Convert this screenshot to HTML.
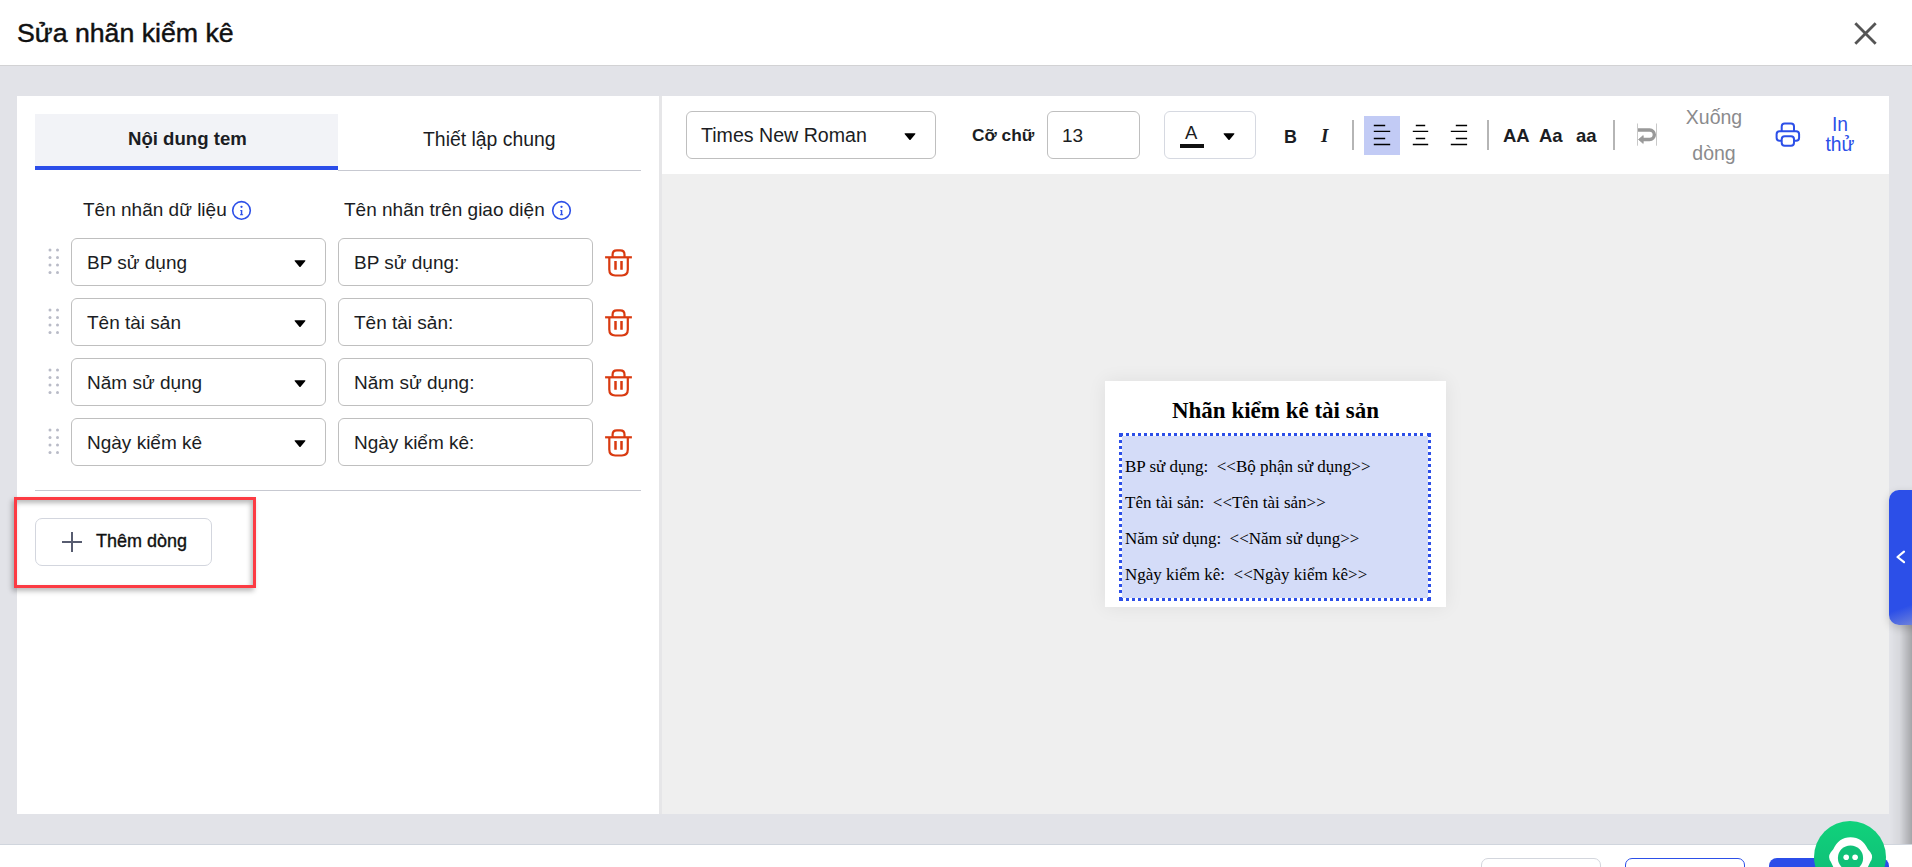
<!DOCTYPE html>
<html><head><meta charset="utf-8">
<style>
*{margin:0;padding:0;box-sizing:border-box}
html,body{width:1912px;height:867px;overflow:hidden}
body{background:#e2e3e8;font-family:"Liberation Sans",sans-serif;color:#1b1d23;position:relative}
.abs{position:absolute}
#hdr{left:0;top:0;width:1912px;height:66px;background:#fff;border-bottom:1px solid #d2d2d4}
#title{left:17px;top:16px;font-size:26.7px;line-height:34px;color:#111;white-space:nowrap;-webkit-text-stroke:0.45px #111}
#close{left:1850px;top:18px;width:30px;height:30px}
#lp{left:17px;top:96px;width:642px;height:718px;background:#fff}
#div{left:659px;top:96px;width:3px;height:718px;background:#e6e6e8}
#rp{left:662px;top:96px;width:1227px;height:718px;background:#efefef}
#tb{left:662px;top:96px;width:1227px;height:78px;background:#fff}
.tab1{left:35px;top:114px;width:303px;height:52px;background:#f2f3f7}
.tabbar{left:35px;top:166px;width:303px;height:4px;background:#2b4de9}
.tabline{left:338px;top:170px;width:303px;height:1px;background:#c7c9d1}
.tabtxt{font-size:18px;line-height:22px;white-space:nowrap}
.hdrtxt{font-size:19px;line-height:22px;white-space:nowrap}
.box{border:1px solid #bfbfbf;border-radius:6px;background:#fff}
.seltxt{font-size:18.7px;line-height:22px;white-space:nowrap;position:absolute;left:16px;top:12px}
.arrow{position:absolute;width:0;height:0}
.dots{position:absolute;width:12px;height:28px}
.sep{position:absolute;width:2px;background:#b5b5b5}
.prev{font-family:"Liberation Serif",serif;color:#000;white-space:pre}
</style></head>
<body>
<div id="hdr" class="abs"></div>
<div id="title" class="abs">Sửa nhãn kiểm kê</div>
<svg id="close" class="abs" viewBox="0 0 30 30"><path d="M5.3 5.3 L25.7 25.7 M25.7 5.3 L5.3 25.7" stroke="#555" stroke-width="2.8" stroke-linecap="butt"/></svg>

<div id="lp" class="abs"></div>
<div id="div" class="abs"></div>
<div id="rp" class="abs"></div>
<div id="tb" class="abs"></div>

<!-- tabs -->
<div class="abs tab1"></div>
<div class="abs tabbar"></div>
<div class="abs tabline"></div>
<div class="abs tabtxt" style="left:128px;top:128px;font-weight:bold;font-size:18.6px">Nội dung tem</div>
<div class="abs tabtxt" style="left:423px;top:128px;font-size:19.4px">Thiết lập chung</div>

<!-- column headers -->
<div class="abs hdrtxt" style="left:83px;top:199px">Tên nhãn dữ liệu</div>
<svg class="abs" style="left:231px;top:200px" width="21" height="21" viewBox="0 0 21 21"><circle cx="10.5" cy="10.45" r="8.8" fill="none" stroke="#2c4fe8" stroke-width="1.6"/><circle cx="10.5" cy="6.8" r="1.15" fill="#2c4fe8"/><path d="M9.3 9.9 H11.3 V14.3 H12.1 V15.3 H9 V14.3 H9.8 V10.9 H9.3Z" fill="#2c4fe8"/></svg>
<div class="abs hdrtxt" style="left:344px;top:199px">Tên nhãn trên giao diện</div>
<svg class="abs" style="left:551px;top:200px" width="21" height="21" viewBox="0 0 21 21"><circle cx="10.5" cy="10.45" r="8.8" fill="none" stroke="#2c4fe8" stroke-width="1.6"/><circle cx="10.5" cy="6.8" r="1.15" fill="#2c4fe8"/><path d="M9.3 9.9 H11.3 V14.3 H12.1 V15.3 H9 V14.3 H9.8 V10.9 H9.3Z" fill="#2c4fe8"/></svg>

<!--ROWS--><svg class="abs" style="left:48px;top:248px" width="12" height="27" viewBox="0 0 12 27" fill="#b9bbc7"><circle cx="2" cy="2" r="1.5"/><circle cx="2" cy="9.5" r="1.5"/><circle cx="2" cy="17" r="1.5"/><circle cx="2" cy="24.5" r="1.5"/><circle cx="9.5" cy="2" r="1.5"/><circle cx="9.5" cy="9.5" r="1.5"/><circle cx="9.5" cy="17" r="1.5"/><circle cx="9.5" cy="24.5" r="1.5"/></svg>
<div class="abs box" style="left:71px;top:238px;width:255px;height:48px"></div>
<div class="abs hdrtxt" style="left:87px;top:252px">BP sử dụng</div>
<svg class="abs" style="left:293px;top:259px" width="14" height="10" viewBox="0 0 14 10"><path d="M2.2 1.2 H11.8 Q13 1.2 12.2 2.2 L7.8 7.6 Q7 8.6 6.2 7.6 L1.8 2.2 Q1 1.2 2.2 1.2Z" fill="#000"/></svg>
<div class="abs box" style="left:338px;top:238px;width:255px;height:48px"></div>
<div class="abs hdrtxt" style="left:354px;top:252px">BP sử dụng:</div>
<svg class="abs" style="left:600px;top:245px" width="36" height="36" viewBox="0 0 36 36" fill="none" stroke="#d93a10" stroke-width="2.2"><path d="M5.1 12.3 H31.9"/><path d="M12.6 12.3 V9.6 Q12.6 5.3 16.9 5.3 H20.2 Q24.5 5.3 24.5 9.6 V12.3"/><path d="M9.3 12.3 V24.6 Q9.3 30.5 15.2 30.5 H21.9 Q27.8 30.5 27.8 24.6 V12.3"/><path d="M15.5 16 V24.7 M21.5 16 V24.7" stroke-width="2.5"/></svg>
<svg class="abs" style="left:48px;top:308px" width="12" height="27" viewBox="0 0 12 27" fill="#b9bbc7"><circle cx="2" cy="2" r="1.5"/><circle cx="2" cy="9.5" r="1.5"/><circle cx="2" cy="17" r="1.5"/><circle cx="2" cy="24.5" r="1.5"/><circle cx="9.5" cy="2" r="1.5"/><circle cx="9.5" cy="9.5" r="1.5"/><circle cx="9.5" cy="17" r="1.5"/><circle cx="9.5" cy="24.5" r="1.5"/></svg>
<div class="abs box" style="left:71px;top:298px;width:255px;height:48px"></div>
<div class="abs hdrtxt" style="left:87px;top:312px">Tên tài sản</div>
<svg class="abs" style="left:293px;top:319px" width="14" height="10" viewBox="0 0 14 10"><path d="M2.2 1.2 H11.8 Q13 1.2 12.2 2.2 L7.8 7.6 Q7 8.6 6.2 7.6 L1.8 2.2 Q1 1.2 2.2 1.2Z" fill="#000"/></svg>
<div class="abs box" style="left:338px;top:298px;width:255px;height:48px"></div>
<div class="abs hdrtxt" style="left:354px;top:312px">Tên tài sản:</div>
<svg class="abs" style="left:600px;top:305px" width="36" height="36" viewBox="0 0 36 36" fill="none" stroke="#d93a10" stroke-width="2.2"><path d="M5.1 12.3 H31.9"/><path d="M12.6 12.3 V9.6 Q12.6 5.3 16.9 5.3 H20.2 Q24.5 5.3 24.5 9.6 V12.3"/><path d="M9.3 12.3 V24.6 Q9.3 30.5 15.2 30.5 H21.9 Q27.8 30.5 27.8 24.6 V12.3"/><path d="M15.5 16 V24.7 M21.5 16 V24.7" stroke-width="2.5"/></svg>
<svg class="abs" style="left:48px;top:368px" width="12" height="27" viewBox="0 0 12 27" fill="#b9bbc7"><circle cx="2" cy="2" r="1.5"/><circle cx="2" cy="9.5" r="1.5"/><circle cx="2" cy="17" r="1.5"/><circle cx="2" cy="24.5" r="1.5"/><circle cx="9.5" cy="2" r="1.5"/><circle cx="9.5" cy="9.5" r="1.5"/><circle cx="9.5" cy="17" r="1.5"/><circle cx="9.5" cy="24.5" r="1.5"/></svg>
<div class="abs box" style="left:71px;top:358px;width:255px;height:48px"></div>
<div class="abs hdrtxt" style="left:87px;top:372px">Năm sử dụng</div>
<svg class="abs" style="left:293px;top:379px" width="14" height="10" viewBox="0 0 14 10"><path d="M2.2 1.2 H11.8 Q13 1.2 12.2 2.2 L7.8 7.6 Q7 8.6 6.2 7.6 L1.8 2.2 Q1 1.2 2.2 1.2Z" fill="#000"/></svg>
<div class="abs box" style="left:338px;top:358px;width:255px;height:48px"></div>
<div class="abs hdrtxt" style="left:354px;top:372px">Năm sử dụng:</div>
<svg class="abs" style="left:600px;top:365px" width="36" height="36" viewBox="0 0 36 36" fill="none" stroke="#d93a10" stroke-width="2.2"><path d="M5.1 12.3 H31.9"/><path d="M12.6 12.3 V9.6 Q12.6 5.3 16.9 5.3 H20.2 Q24.5 5.3 24.5 9.6 V12.3"/><path d="M9.3 12.3 V24.6 Q9.3 30.5 15.2 30.5 H21.9 Q27.8 30.5 27.8 24.6 V12.3"/><path d="M15.5 16 V24.7 M21.5 16 V24.7" stroke-width="2.5"/></svg>
<svg class="abs" style="left:48px;top:428px" width="12" height="27" viewBox="0 0 12 27" fill="#b9bbc7"><circle cx="2" cy="2" r="1.5"/><circle cx="2" cy="9.5" r="1.5"/><circle cx="2" cy="17" r="1.5"/><circle cx="2" cy="24.5" r="1.5"/><circle cx="9.5" cy="2" r="1.5"/><circle cx="9.5" cy="9.5" r="1.5"/><circle cx="9.5" cy="17" r="1.5"/><circle cx="9.5" cy="24.5" r="1.5"/></svg>
<div class="abs box" style="left:71px;top:418px;width:255px;height:48px"></div>
<div class="abs hdrtxt" style="left:87px;top:432px">Ngày kiểm kê</div>
<svg class="abs" style="left:293px;top:439px" width="14" height="10" viewBox="0 0 14 10"><path d="M2.2 1.2 H11.8 Q13 1.2 12.2 2.2 L7.8 7.6 Q7 8.6 6.2 7.6 L1.8 2.2 Q1 1.2 2.2 1.2Z" fill="#000"/></svg>
<div class="abs box" style="left:338px;top:418px;width:255px;height:48px"></div>
<div class="abs hdrtxt" style="left:354px;top:432px">Ngày kiểm kê:</div>
<svg class="abs" style="left:600px;top:425px" width="36" height="36" viewBox="0 0 36 36" fill="none" stroke="#d93a10" stroke-width="2.2"><path d="M5.1 12.3 H31.9"/><path d="M12.6 12.3 V9.6 Q12.6 5.3 16.9 5.3 H20.2 Q24.5 5.3 24.5 9.6 V12.3"/><path d="M9.3 12.3 V24.6 Q9.3 30.5 15.2 30.5 H21.9 Q27.8 30.5 27.8 24.6 V12.3"/><path d="M15.5 16 V24.7 M21.5 16 V24.7" stroke-width="2.5"/></svg><!--/ROWS-->
<div class="abs" style="left:35px;top:490px;width:606px;height:1px;background:#c7c9d1"></div>
<!-- Them dong button -->
<div class="abs" style="left:35px;top:518px;width:177px;height:48px;border:1px solid #d3d6de;border-radius:7px;background:#fff"></div>
<svg class="abs" style="left:60px;top:530px" width="24" height="24" viewBox="0 0 24 24"><path d="M12 2 V22 M2 12 H22" stroke="#575c70" stroke-width="2"/></svg>
<div class="abs" style="left:96px;top:530px;font-size:18px;line-height:22px;white-space:nowrap;-webkit-text-stroke:0.35px #111;color:#111">Thêm dòng</div>
<!-- red annotation -->
<div class="abs" style="left:14px;top:497px;width:242px;height:91px;border:3px solid #fc3b43;box-shadow:-2px 3px 5px rgba(0,0,0,.28), inset -2px 3px 5px rgba(0,0,0,.28)"></div>

<!-- toolbar -->
<div class="abs box" style="left:686px;top:111px;width:250px;height:48px"></div>
<div class="abs" style="left:701px;top:124px;font-size:19.6px;line-height:22px;white-space:nowrap">Times New Roman</div>
<div class="abs" style="left:972px;top:123.5px;font-size:17.3px;line-height:22px;font-weight:bold;white-space:nowrap">Cỡ chữ</div>
<div class="abs box" style="left:1047px;top:111px;width:93px;height:48px"></div>
<div class="abs" style="left:1062px;top:125px;font-size:19px;line-height:22px">13</div>
<div class="abs box" style="left:1164px;top:111px;width:92px;height:48px;border-color:#d6d9e1"></div>
<div class="abs" style="left:1185px;top:123px;font-size:18.5px;line-height:20px">A</div>
<div class="abs" style="left:1180px;top:144px;width:24px;height:4px;background:#111"></div>

<div class="abs" style="left:1284px;top:125.5px;font-size:17.9px;line-height:22px;font-weight:bold">B</div>
<div class="abs" style="left:1321px;top:125px;font-size:19px;line-height:22px;font-weight:bold;font-style:italic;font-family:'Liberation Serif',serif">I</div>
<div class="sep" style="left:1352px;top:120px;height:30px"></div>
<div class="abs" style="left:1364px;top:116px;width:36px;height:39px;background:#c2cbf5"></div>
<div class="sep" style="left:1487px;top:120px;height:30px"></div>
<div class="abs" style="left:1503px;top:125px;font-size:18.5px;line-height:22px;font-weight:bold;white-space:nowrap">AA</div>
<div class="abs" style="left:1539px;top:125px;font-size:18.5px;line-height:22px;font-weight:bold;white-space:nowrap">Aa</div>
<div class="abs" style="left:1576px;top:125px;font-size:18.5px;line-height:22px;font-weight:bold;white-space:nowrap">aa</div>
<div class="sep" style="left:1613px;top:120px;height:30px"></div>
<div class="abs" style="left:1685px;top:99px;font-size:19.5px;line-height:36px;color:#8b8b8d;text-align:center;width:58px">Xuống<br>dòng</div>
<div class="abs" style="left:1820px;top:115px;font-size:19.3px;line-height:20.4px;color:#2c4fe8;text-align:center;width:40px">In<br>thử</div>

<!-- preview card -->
<div class="abs" style="left:1105px;top:381px;width:341px;height:226px;background:#fff;box-shadow:0 0 18px rgba(0,0,0,.07)"></div>
<div class="abs prev" style="left:1105px;top:396px;width:341px;text-align:center;font-size:23px;line-height:30px;font-weight:bold">Nhãn kiểm kê tài sản</div>
<div class="abs" style="left:1119px;top:433px;width:312px;height:168px;background:#d4dcf8;background-clip:padding-box;border:3px dotted #2c4fe8"></div>
<div class="abs prev" style="left:1125px;top:449px;font-size:17px;line-height:36px">BP sử dụng:  &lt;&lt;Bộ phận sử dụng&gt;&gt;
Tên tài sản:  &lt;&lt;Tên tài sản&gt;&gt;
Năm sử dụng:  &lt;&lt;Năm sử dụng&gt;&gt;
Ngày kiểm kê:  &lt;&lt;Ngày kiểm kê&gt;&gt;</div>

<!-- side tab -->
<div class="abs" style="left:1890px;top:596px;width:22px;height:271px;background:linear-gradient(90deg,rgba(0,0,0,0),rgba(0,0,0,.05) 45%,rgba(0,0,0,.27));-webkit-mask-image:linear-gradient(180deg,transparent,#000 30px)"></div>
<div class="abs" style="left:1889px;top:490px;width:40px;height:135px;background:linear-gradient(160deg,#2c4fe8 0%,#2c4fe8 82%,#7f8fd8 100%);border-radius:10px;box-shadow:0 3px 8px rgba(0,0,0,.18)"></div>


<!-- toolbar arrows -->
<svg class="abs" style="left:903px;top:132px" width="14" height="10" viewBox="0 0 14 10"><path d="M2.2 1.2 H11.8 Q13 1.2 12.2 2.2 L7.8 7.6 Q7 8.6 6.2 7.6 L1.8 2.2 Q1 1.2 2.2 1.2Z" fill="#000"/></svg>
<svg class="abs" style="left:1222px;top:132px" width="14" height="10" viewBox="0 0 14 10"><path d="M2.2 1.2 H11.8 Q13 1.2 12.2 2.2 L7.8 7.6 Q7 8.6 6.2 7.6 L1.8 2.2 Q1 1.2 2.2 1.2Z" fill="#000"/></svg>
<!-- align icons -->
<svg class="abs" style="left:1360px;top:110px" width="120" height="50" viewBox="1360 110 120 50" stroke="#000" stroke-width="1.35" stroke-linecap="butt" fill="none">
<path d="M1373.8 125.5 H1385.2 M1373.8 131.4 H1390.2 M1373.8 138.5 H1385.2 M1373.8 144.5 H1390.2"/>
<path d="M1415.8 125.5 H1425.2 M1412.8 131.4 H1428.2 M1415.8 138.5 H1425.2 M1412.8 144.5 H1428.2"/>
<path d="M1455.8 125.5 H1467.1 M1450.8 131.4 H1467.1 M1455.8 138.5 H1467.1 M1450.8 144.5 H1467.1"/>
</svg>
<!-- wrap icon -->
<svg class="abs" style="left:1628px;top:115px" width="40" height="40" viewBox="1628 115 40 40">
<path d="M1637.5 123.5 V145.7 M1656.5 123.5 V145.7" stroke="#c9c9c9" stroke-width="1"/>
<path d="M1638 130 H1649.6 A4.75 4.75 0 0 1 1649.6 139.5 H1642.5" stroke="#999" stroke-width="3.4" fill="none"/>
<path d="M1638.5 139.5 L1643.2 135.6 V143.4 Z" fill="#999" stroke="#999" stroke-width="0.8" stroke-linejoin="round"/>
</svg>
<!-- printer icon -->
<svg class="abs" style="left:1768px;top:115px" width="40" height="40" viewBox="1768 115 40 40" stroke="#2c4fe8" stroke-width="2" fill="none">
<path d="M1781.7 131 V126.6 Q1781.7 123.6 1784.7 123.6 H1791 Q1794 123.6 1794 126.6 V131"/>
<path d="M1781.7 140.8 H1779.6 Q1776.6 140.8 1776.6 137.8 V134.2 Q1776.6 131.2 1779.6 131.2 H1796.1 Q1799.1 131.2 1799.1 134.2 V137.8 Q1799.1 140.8 1796.1 140.8 H1794"/>
<rect x="1781.7" y="136.3" width="12.3" height="9.5" rx="3"/>
</svg>
<!-- side tab arrow -->
<svg class="abs" style="left:1889px;top:545px" width="23" height="24" viewBox="1889 545 23 24"><path d="M1904 551.7 L1897.5 557 L1904 562.2" stroke="#fff" stroke-width="2.2" stroke-linecap="round" stroke-linejoin="round" fill="none"/></svg>
<!-- right edge shadow -->

<!-- footer -->
<div class="abs" style="left:0;top:844px;width:1912px;height:23px;background:#fff;border-top:1px solid #d0d5dd"></div>
<div class="abs" style="left:1481px;top:858px;width:120px;height:40px;border:1.3px solid #d3d6dd;border-radius:7px;background:#fff"></div>
<div class="abs" style="left:1625px;top:858px;width:120px;height:40px;border:1.5px solid #2c4fe8;border-radius:7px;background:#fff"></div>
<div class="abs" style="left:1769px;top:858px;width:120px;height:40px;border-radius:8px;background:#2b4de9"></div>
<!-- chat bubble -->
<div class="abs" style="left:1814px;top:821px;width:72px;height:72px;border-radius:50%;background:linear-gradient(#10d27b,#10b877)"></div>
<svg class="abs" style="left:1814px;top:821px" width="72" height="46" viewBox="1814 821 72 46">
<path d="M1850.5 837.3 C1842.5 837.3 1837 841.5 1833.3 849.3 L1830.8 852.3 Q1829 854.8 1829.1 857.3 Q1829.3 859.8 1830.8 861.8 L1833.8 868 L1867.4 868 L1870.4 861.8 Q1871.9 859.8 1872.1 857.3 Q1872.2 854.8 1870.4 852.3 L1867.9 849.3 C1864.2 841.5 1858.7 837.3 1850.5 837.3Z" fill="#fff"/>
<circle cx="1850.5" cy="858" r="12.6" fill="#10c178"/>
<circle cx="1846.2" cy="857.3" r="2.8" fill="#fff"/><circle cx="1855.1" cy="857.3" r="2.8" fill="#fff"/>
</svg>
</body></html>
